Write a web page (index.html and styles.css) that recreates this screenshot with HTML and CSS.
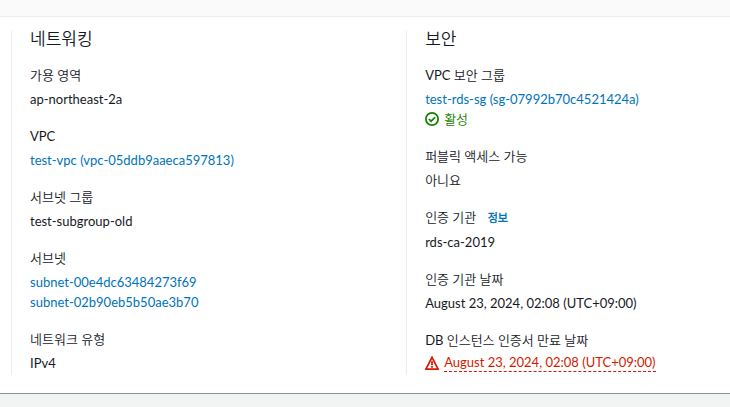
FILE: index.html
```
<!DOCTYPE html>
<html lang="ko">
<head>
  <meta charset="UTF-8" />
  <meta name="viewport" content="width=device-width, initial-scale=1.0"/>
  <title>연결 및 보안</title>
  <link rel="stylesheet" href="styles.css">
</head>
<body>

  <main class="panel">
    <div class="panel-header"></div>

    <div class="columns">
      <section class="column">
        <h2>네트워킹</h2>
        <dl>
          <div class="field">
            <dt>가용 영역</dt>
            <dd>ap-northeast-2a</dd>
          </div>
          <div class="field">
            <dt>VPC</dt>
            <dd><a href="#">test-vpc (vpc-05ddb9aaeca597813)</a></dd>
          </div>
          <div class="field">
            <dt>서브넷 그룹</dt>
            <dd>test-subgroup-old</dd>
          </div>
          <div class="field">
            <dt>서브넷</dt>
            <dd><a href="#">subnet-00e4dc63484273f69</a></dd>
            <dd><a href="#">subnet-02b90eb5b50ae3b70</a></dd>
          </div>
          <div class="field">
            <dt>네트워크 유형</dt>
            <dd>IPv4</dd>
          </div>
        </dl>
      </section>

      <section class="column">
        <h2>보안</h2>
        <dl>
          <div class="field">
            <dt>VPC 보안 그룹</dt>
            <dd><a href="#">test-rds-sg (sg-07992b70c4521424a)</a></dd>
            <dd class="status active">
              <svg class="icon" viewBox="0 0 16 16" aria-hidden="true">
                <circle cx="8" cy="8" r="7"/>
                <path d="M4.5 8l2.5 2.5 4.5-4.5"/>
              </svg>
              <span>활성</span>
            </dd>
          </div>
          <div class="field">
            <dt>퍼블릭 액세스 가능</dt>
            <dd>아니요</dd>
          </div>
          <div class="field">
            <dt>인증 기관 <a class="info" href="#">정보</a></dt>
            <dd>rds-ca-2019</dd>
          </div>
          <div class="field">
            <dt>인증 기관 날짜</dt>
            <dd>August 23, 2024, 02:08 (UTC+09:00)</dd>
          </div>
          <div class="field">
            <dt>DB 인스턴스 인증서 만료 날짜</dt>
            <dd class="status expired">
              <svg class="icon" viewBox="0 0 16 16" aria-hidden="true">
                <path d="M8 1.5L15 15H1z"/>
                <path d="M8 6v4.5M8 11.5v2"/>
              </svg>
              <span class="date">August 23, 2024, 02:08 (UTC+09:00)</span>
            </dd>
          </div>
        </dl>
      </section>
    </div>
  </main>

</body>
</html>
```
FILE: styles.css
```
* {
  box-sizing: border-box;
}

body {
  margin: 0;
  background: #f2f3f3;
  color: #16191f;
  font-family: Lato, "Noto Sans CJK KR DemiLight", "Noto Sans CJK KR", sans-serif;
  font-size: 13px;
  line-height: 20px;
}

.panel {
  background: #fff;
  border-bottom: 1px solid #879596;
}

.panel-header {
  height: 17px;
  background: #fafafa;
  border-bottom: 1px solid #eaeded;
}

.columns {
  display: grid;
  grid-template-columns: 1.22fr 1fr;
  padding: 14px 0 18px 11px;
}

.column {
  padding: 0 0 2px 18px;
  border-left: 1px solid #eaeded;
}

h2 {
  margin: 0 0 18px;
  font-size: 17px;
  font-weight: 300;
  line-height: 16px;
}

dl {
  display: flex;
  flex-direction: column;
  gap: 17px;
  margin: 0;
}

dt {
  padding-bottom: 4px;
}

dd {
  margin: 0;
}

a {
  color: #0073bb;
  text-decoration: none;
}

a:hover {
  text-decoration: underline;
}

.info {
  margin-left: 8px;
  font-size: 11px;
  font-weight: 700;
}

.status {
  display: flex;
  align-items: center;
  gap: 5px;
}

.icon {
  width: 14px;
  height: 14px;
  fill: none;
  stroke: currentColor;
  stroke-width: 2;
}

.active {
  color: #148000;
}

.expired {
  color: #d41a00;
}

.date {
  line-height: 17px;
  border-bottom: 1px dashed #d41a00;
}
```
